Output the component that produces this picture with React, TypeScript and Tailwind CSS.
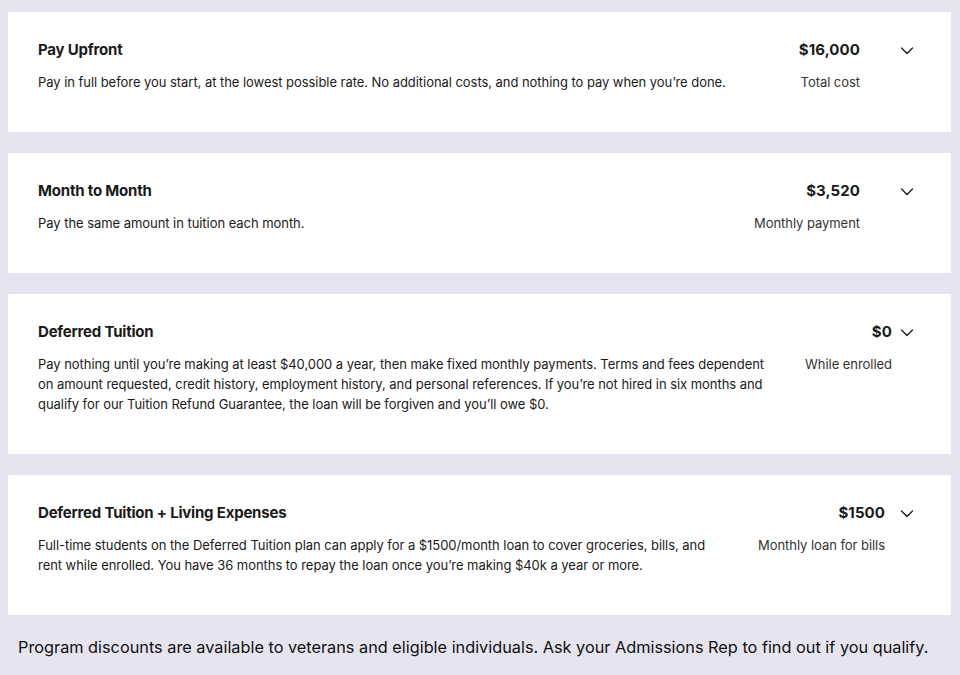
const plans = [
  {
    title: "Pay Upfront",
    lines: [
      "Pay in full before you start, at the lowest possible rate. No additional costs, and nothing to pay when you’re done.",
    ],
    price: "$16,000",
    label: "Total cost",
    gap: "mr-[40px]",
  },
  {
    title: "Month to Month",
    lines: ["Pay the same amount in tuition each month."],
    price: "$3,520",
    label: "Monthly payment",
    gap: "mr-[40px]",
  },
  {
    title: "Deferred Tuition",
    lines: [
      "Pay nothing until you’re making at least $40,000 a year, then make fixed monthly payments. Terms and fees dependent",
      "on amount requested, credit history, employment history, and personal references. If you’re not hired in six months and",
      "qualify for our Tuition Refund Guarantee, the loan will be forgiven and you’ll owe $0.",
    ],
    price: "$0",
    label: "While enrolled",
    gap: "mr-[8px]",
  },
  {
    title: "Deferred Tuition + Living Expenses",
    lines: [
      "Full-time students on the Deferred Tuition plan can apply for a $1500/month loan to cover groceries, bills, and",
      "rent while enrolled. You have 36 months to repay the loan once you’re making $40k a year or more.",
    ],
    price: "$1500",
    label: "Monthly loan for bills",
    gap: "mr-[15px]",
  },
];

function Chevron() {
  return (
    <svg width="14" height="20" viewBox="0 0 14 20" fill="none" className="shrink-0 mt-[1px]">
      <polyline points="1.5,7 7,12.5 12.5,7" stroke="#1a1a1a" strokeWidth="1.3" strokeLinecap="round" strokeLinejoin="round" />
    </svg>
  );
}

export default function App() {
  return (
    <div
      className="w-[960px] h-[675px] bg-[#e6e4ef] pt-[12px] pl-[8px] pr-[9px] text-[#1a1a1a]"
      style={{ fontFamily: "Inter, 'Liberation Sans', sans-serif" }}
    >
      <div className="flex flex-col gap-[21px]">
        {plans.map((p) => (
          <div key={p.title} className="bg-white flex pl-[30px] pr-[37px] pt-[28px] pb-[40px]">
            <div className="flex-1 flex flex-col">
              <div className="text-[15px] leading-[20px] font-bold tracking-[-0.2px]">{p.title}</div>
              <div className="mt-[12px] text-[13px] leading-[20px] tracking-[-0.05px]">
                {p.lines.map((l) => (
                  <div key={l} className="whitespace-nowrap">{l}</div>
                ))}
              </div>
            </div>
            <div className={`flex flex-col items-end ${p.gap}`}>
              <div className="text-[15px] leading-[20px] font-bold tracking-[0.1px]">{p.price}</div>
              <div className="mt-[12px] text-[13px] leading-[20px] text-[#333] tracking-[-0.05px]">{p.label}</div>
            </div>
            <Chevron />
          </div>
        ))}
      </div>
      <p className="mt-[21px] pl-[10px] text-[16.3px] leading-[22px] text-[#111]">
        Program discounts are available to veterans and eligible individuals. Ask your Admissions Rep to find out if you qualify.
      </p>
    </div>
  );
}
